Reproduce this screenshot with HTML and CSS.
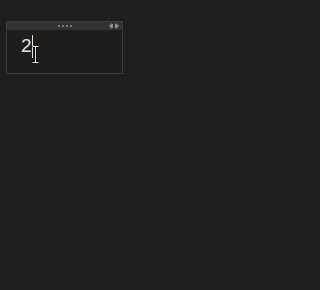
FILE: index.html
```html
<!DOCTYPE html>
<html>
<head>
<meta charset="utf-8">
<link rel="stylesheet" href="styles.css">
</head>
<body>
<div class="panel">
  <div class="header">
    <div class="grip"><i></i><i></i><i></i><i></i></div>
    <div class="arrows">
      <svg width="10" height="6" viewBox="0 0 10 6"><path d="M3 0 L0 3 L3 6 Z" fill="#8c8c8c"/><rect x="3" y="1" width="1" height="4" fill="#8c8c8c"/><rect x="6" y="1" width="1" height="4" fill="#8c8c8c"/><path d="M7 0 L10 3 L7 6 Z" fill="#8c8c8c"/></svg>
    </div>
  </div>
  <div class="editor">
    <span class="value">2</span><span class="caret"></span>
    <svg class="ibeam" width="7" height="17" viewBox="0 0 7 17"><path d="M0.5 0.5 H6.5 M3.5 0.5 V16.5 M0.5 16.5 H6.5" stroke="#000" stroke-width="2" fill="none"/><path d="M0.5 0.5 H6.5 M3.5 0.5 V16.5 M0.5 16.5 H6.5" stroke="#e8e8e8" stroke-width="1" fill="none"/></svg>
  </div>
</div>
</body>
</html>
```
FILE: styles.css
```css
html, body {
  margin: 0;
  background: #1f1e1d;
  height: 100%;
}
body {
  padding: 21px 0 0 6px;
  box-sizing: border-box;
  font-family: "Liberation Sans", sans-serif;
}
.panel {
  width: 115px;
  border: 1px solid #3b3b3b;
  background: #1e1d1c;
}
.header {
  height: 8px;
  background: #333333;
  position: relative;
  display: flex;
  align-items: center;
  justify-content: center;
}
.grip {
  display: flex;
  gap: 2px;
}
.grip i {
  display: block;
  width: 2px;
  height: 2px;
  background: #7a7a7a;
}
.arrows {
  position: absolute;
  right: 3px;
  top: 1px;
  display: flex;
}
.editor {
  height: 43px;
  position: relative;
  padding: 5px 0 0 14px;
  box-sizing: border-box;
  color: #e2e2e2;
  font-size: 19px;
  line-height: 22px;
  display: flex;
  align-items: flex-start;
}
.caret {
  display: block;
  width: 1px;
  height: 23px;
  background: #e0e0e0;
}
.ibeam {
  position: absolute;
  left: 25px;
  top: 16px;
}
```
